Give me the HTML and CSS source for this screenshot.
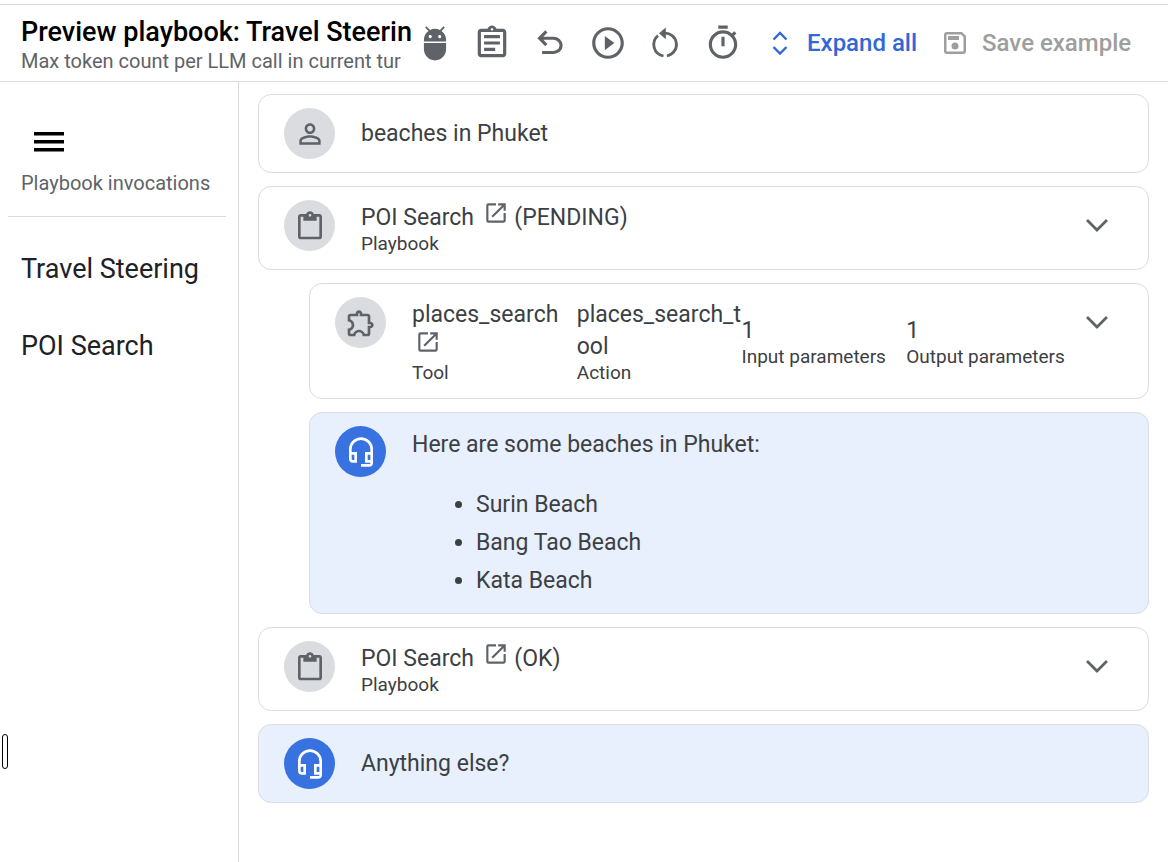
FILE: index.html
```html
<!DOCTYPE html>
<html lang="en">
<head>
<meta charset="utf-8">
<title>Preview playbook</title>
<link rel="stylesheet" href="styles.css">
</head>
<body>
<svg class="sprite" aria-hidden="true">
  <symbol id="clipboard" viewBox="0 0 24 24"><path d="M19 3h-4.180C14.400 1.840 13.300 1 12 1s-2.400.84-2.820 2H5c-1.100 0-2 .9-2 2v15c0 1.100.9 2 2 2h14c1.100 0 2-.9 2-2V5c0-1.100-.9-2-2-2zm-7 0c.55 0 1 .45 1 1s-.45 1-1 1-1-.45-1-1 .45-1 1-1zm7 17H5V5h2v3h10V5h2v15z"/></symbol>
  <symbol id="headset" viewBox="0 0 24 24"><path d="M12 1a9 9 0 0 0-9 9v7a3 3 0 0 0 3 3h3v-8H5v-2a7 7 0 0 1 14 0v2h-4v8h4v1h-7v2h6a3 3 0 0 0 3-3V10a9 9 0 0 0-9-9zM7 14v4H6a1 1 0 0 1-1-1v-3h2zm10 4v-4h2v4h-2z"/></symbol>
  <symbol id="open" viewBox="0 0 24 24"><path d="M19 19H5V5h7V3H5a2 2 0 0 0-2 2v14a2 2 0 0 0 2 2h14c1.100 0 2-.9 2-2v-7h-2v7zM14 3v2h3.590l-9.830 9.830 1.410 1.410L19 6.410V10h2V3h-7z"/></symbol>
  <symbol id="chevron" viewBox="0 0 32 32"><path d="M6 10l10 10 10-10" fill="none" stroke="currentColor" stroke-width="2.800"/></symbol>
</svg>

<header class="topbar">
  <div class="heading">
    <h1 class="title">Preview playbook: Travel Steerin</h1>
    <p class="subtitle">Max token count per LLM call in current tur</p>
  </div>
  <div class="tools">
    <button class="tool" aria-label="Debug"><svg viewBox="0 0 24 24"><path d="M5 16c0 3.870 3.130 7 7 7s7-3.130 7-7v-4H5v4zM16.120 4.370l2.100-2.100-.82-.83-2.300 2.310C14.160 3.280 13.120 3 12 3s-2.160.28-3.090.75L6.600 1.440l-.82.83 2.100 2.100C6.140 5.640 5 7.680 5 10v1h14v-1c0-2.320-1.140-4.360-2.880-5.630zM9 9c-.55 0-1-.45-1-1s.45-1 1-1 1 .45 1 1-.45 1-1 1zm6 0c-.55 0-1-.45-1-1s.45-1 1-1 1 .45 1 1-.45 1-1 1z"/></svg></button>
    <button class="tool" aria-label="Log"><svg viewBox="0 0 24 24"><path d="M7 15h7v2H7zm0-4h10v2H7zm0-4h10v2H7zm12-4h-4.180C14.400 1.840 13.300 1 12 1s-2.400.84-2.820 2H5c-1.100 0-2 .9-2 2v14c0 1.100.9 2 2 2h14c1.100 0 2-.9 2-2V5c0-1.100-.9-2-2-2zm-7-.25c.41 0 .75.34.75.75s-.34.75-.75.75-.75-.34-.75-.75.34-.75.75-.75zM19 19H5V5h14v14z"/></svg></button>
    <button class="tool" aria-label="Undo"><svg viewBox="0 -960 960 960"><path d="M280-200v-80h284q63 0 109.500-40T720-420q0-60-46.500-100T564-560H312l104 104-56 56-200-200 200-200 56 56-104 104h252q97 0 166.500 63T800-420q0 94-69.500 157T564-200H280Z"/></svg></button>
    <button class="tool" aria-label="Run"><svg viewBox="0 0 24 24"><path d="M10 16.500l6-4.500-6-4.500v9zM12 2C6.480 2 2 6.480 2 12s4.480 10 10 10 10-4.480 10-10S17.520 2 12 2zm0 18c-4.410 0-8-3.590-8-8s3.590-8 8-8 8 3.590 8 8-3.590 8-8 8z"/></svg></button>
    <button class="tool" aria-label="Restart"><svg viewBox="0 0 38 38"><path d="M12 11.700A11.400 11.400 0 0 0 17.500 31.800M20.900 31.800A11.400 11.400 0 0 0 18 9.200" fill="none" stroke="currentColor" stroke-width="2.800"/><path d="M13 9.200L19.800 3.600V15.200Z"/></svg></button>
    <button class="tool" aria-label="Latency"><svg viewBox="0 0 24 24"><path d="M15 1H9v2h6V1zm-4 13h2V8h-2v6zm8.030-6.610l1.420-1.420c-.43-.51-.9-.99-1.410-1.410l-1.420 1.420C16.070 4.740 14.120 4 12 4c-4.970 0-9 4.030-9 9s4.020 9 9 9 9-4.030 9-9c0-2.120-.74-4.070-1.970-5.610zM12 20c-3.870 0-7-3.130-7-7s3.130-7 7-7 7 3.130 7 7-3.130 7-7 7z"/></svg></button>
  </div>
  <button class="action action-primary"><svg viewBox="0 0 28 28"><path d="M7.500 10.500L14 4l6.500 6.500M7.500 18l6.500 6.500 6.500-6.500" fill="none" stroke="currentColor" stroke-width="2.400"/></svg>Expand all</button>
  <button class="action action-muted" disabled><svg viewBox="0 0 28 28"><path fill-rule="evenodd" d="M6 3h15l4 4v15a3 3 0 0 1-3 3H6a3 3 0 0 1-3-3V6a3 3 0 0 1 3-3zm-.5 2.500v17h17V8l-2.500-2.500zM7 7h11v4H7zm7 6.500a3.500 3.500 0 1 1 0 7 3.500 3.500 0 0 1 0-7z"/></svg>Save example</button>
</header>

<div class="body">
  <nav class="sidebar">
    <button class="menu" aria-label="Menu"><svg viewBox="0 0 30 20"><path d="M0 0h30v3.500H0zM0 8h30v3.500H0zM0 16h30v3.500H0z"/></svg></button>
    <h2 class="nav-title">Playbook invocations</h2>
    <a class="nav-link" href="#travel">Travel Steering</a>
    <a class="nav-link" href="#poi">POI Search</a>
    <div class="handle"></div>
  </nav>

  <main class="steps">
    <section class="card">
      <span class="avatar"><svg viewBox="0 0 24 24"><path d="M12 5.900c1.160 0 2.100.94 2.100 2.100s-.94 2.100-2.100 2.100S9.900 9.160 9.900 8s.94-2.100 2.100-2.100m0 9c2.970 0 6.100 1.460 6.100 2.100v1.100H5.900V17c0-.64 3.130-2.100 6.100-2.100M12 4C9.790 4 8 5.790 8 8s1.790 4 4 4 4-1.790 4-4-1.790-4-4-4zm0 9c-2.670 0-8 1.340-8 4v3h16v-3c0-2.660-5.330-4-8-4z"/></svg></span>
      <div class="message"><p>beaches in Phuket</p></div>
    </section>

    <section class="card" id="poi">
      <span class="avatar"><svg><use href="#clipboard"/></svg></span>
      <div class="info">
        <div class="name">POI Search <a class="open" href="#poi" aria-label="Open playbook"><svg><use href="#open"/></svg></a> (PENDING)</div>
        <div class="kind">Playbook</div>
      </div>
      <button class="toggle" aria-label="Expand"><svg><use href="#chevron"/></svg></button>
    </section>

    <section class="card nested">
      <span class="avatar"><svg viewBox="0 0 24 24"><path d="M10.500 4.500c.28 0 .5.220.5.500v2h6v6h2c.28 0 .5.220.5.500s-.22.500-.5.500h-2v6h-2.120c-.68-1.750-2.390-3-4.380-3s-3.700 1.250-4.380 3H4v-2.120c1.750-.68 3-2.390 3-4.380 0-1.990-1.240-3.700-2.990-4.380L4 7h6V5c0-.28.220-.5.500-.5m0-2C9.120 2.500 8 3.620 8 5H4c-1.100 0-1.990.9-1.990 2v3.800h.29c1.490 0 2.700 1.210 2.700 2.700s-1.210 2.700-2.700 2.700H2V20c0 1.100.9 2 2 2h3.800v-.3c0-1.490 1.210-2.700 2.700-2.700s2.700 1.210 2.700 2.700v.3H17c1.100 0 2-.9 2-2v-4c1.380 0 2.500-1.120 2.500-2.500S20.380 11 19 11V7c0-1.100-.9-2-2-2h-4c0-1.380-1.120-2.500-2.500-2.500z"/></svg></span>
      <div class="columns">
        <div class="info"><div class="name">places_search <a class="open" href="#tool" aria-label="Open tool"><svg><use href="#open"/></svg></a></div><div class="kind">Tool</div></div>
        <div class="info"><div class="name">places_search_tool</div><div class="kind">Action</div></div>
        <div class="info"><div class="name">1</div><div class="kind">Input parameters</div></div>
        <div class="info"><div class="name">1</div><div class="kind">Output parameters</div></div>
      </div>
      <button class="toggle" aria-label="Expand"><svg><use href="#chevron"/></svg></button>
    </section>

    <section class="card nested reply">
      <span class="avatar"><svg><use href="#headset"/></svg></span>
      <div class="message">
        <p>Here are some beaches in Phuket:</p>
        <ul class="places"><li>Surin Beach</li><li>Bang Tao Beach</li><li>Kata Beach</li></ul>
      </div>
    </section>

    <section class="card">
      <span class="avatar"><svg><use href="#clipboard"/></svg></span>
      <div class="info">
        <div class="name">POI Search <a class="open" href="#poi" aria-label="Open playbook"><svg><use href="#open"/></svg></a> (OK)</div>
        <div class="kind">Playbook</div>
      </div>
      <button class="toggle" aria-label="Expand"><svg><use href="#chevron"/></svg></button>
    </section>

    <section class="card reply">
      <span class="avatar"><svg><use href="#headset"/></svg></span>
      <div class="message"><p>Anything else?</p></div>
    </section>
  </main>
</div>
</body>
</html>
```

FILE: styles.css
```css
* { box-sizing: border-box; }
body {
  margin: 0;
  padding-top: 4px;
  min-height: 100vh;
  display: flex;
  flex-direction: column;
  background: #fff;
  color: #3c4043;
  font-family: Roboto, sans-serif;
}
h1, h2, p, ul { margin: 0; padding: 0; }
svg { display: block; fill: currentColor; }
button { border: 0; padding: 0; background: none; color: inherit; font: inherit; cursor: pointer; }
.sprite { position: absolute; width: 0; height: 0; }

.topbar {
  display: flex;
  align-items: center;
  height: 78px;
  padding-left: 21px;
  border-top: 1px solid #dadce0;
  border-bottom: 1px solid #dadce0;
}
.heading { flex: 0 0 385px; min-width: 0; padding-top: 3px; white-space: nowrap; }
.title { color: #000; font-size: 27px; font-weight: 500; line-height: 32px; }
.subtitle { color: #5f6368; font-size: 20px; line-height: 26px; }
.tools { display: grid; grid-template-columns: repeat(6, 1fr); flex: 0 0 346px; color: #5f6368; }
.tool { display: flex; justify-content: center; }
.tool svg { width: 38px; height: 38px; }
.action { display: flex; align-items: center; gap: 13px; font-size: 24px; font-weight: 500; white-space: nowrap; }
.action svg { width: 28px; height: 28px; }
.action-primary { margin-left: 14px; color: #3367d6; }
.action-muted { margin-left: 24px; color: #9e9e9e; }

.body { display: flex; flex: 1; }
.sidebar {
  position: relative;
  flex: 0 0 239px;
  display: flex;
  flex-direction: column;
  align-items: flex-start;
  padding: 50px 12px 0 8px;
  border-right: 1px solid #dadce0;
}
.menu { margin-left: 26px; }
.menu svg { width: 30px; height: 20px; color: #000; }
.nav-title {
  align-self: stretch;
  margin: 18px 0 14px;
  padding: 0 0 20px 13px;
  border-bottom: 1px solid #dadce0;
  color: #5f6368;
  font-size: 20px;
  font-weight: 400;
  line-height: 26px;
  white-space: nowrap;
}
.nav-link { padding: 0 13px; color: #202124; font-size: 27px; line-height: 77px; text-decoration: none; }
.handle {
  position: absolute;
  left: 2px;
  bottom: 93px;
  width: 6px;
  height: 35px;
  border: 1px solid #000;
  border-radius: 3px;
  background: #fff;
}

.steps { flex: 1; min-width: 0; display: flex; flex-direction: column; gap: 13px; padding: 12px 19px 24px; }
.card {
  display: flex;
  align-items: flex-start;
  padding: 13px 25px;
  border: 1px solid #dadce0;
  border-radius: 13px;
}
.nested { margin-left: 51px; }
.reply { background: #e8effd; }
.avatar {
  flex: 0 0 51px;
  height: 51px;
  margin-right: 26px;
  display: flex;
  align-items: center;
  justify-content: center;
  border-radius: 50%;
  background: #dadce0;
  color: #5f6368;
}
.avatar svg { width: 32px; height: 32px; }
.reply .avatar { background: #3871e0; color: #fff; }
.message { flex: 1; align-self: center; font-size: 23px; line-height: 38px; }
.places { margin-top: 22px; padding-left: 64px; }
.info { flex: 1; min-width: 0; padding: 2px 0; }
.name { font-size: 23px; line-height: 32px; overflow-wrap: anywhere; }
.kind { font-size: 19px; line-height: 20px; white-space: nowrap; }
.columns { flex: 1; min-width: 0; display: grid; grid-template-columns: repeat(4, minmax(0, 1fr)); align-items: center; }
.open { display: inline-block; margin: -5px 0 5px 3px; color: #5f6368; vertical-align: text-bottom; }
.open svg { width: 26px; height: 26px; }
.toggle { flex: 0 0 52px; height: 51px; display: flex; align-items: center; justify-content: center; color: #5f6368; }
.toggle svg { width: 32px; height: 32px; }
```
